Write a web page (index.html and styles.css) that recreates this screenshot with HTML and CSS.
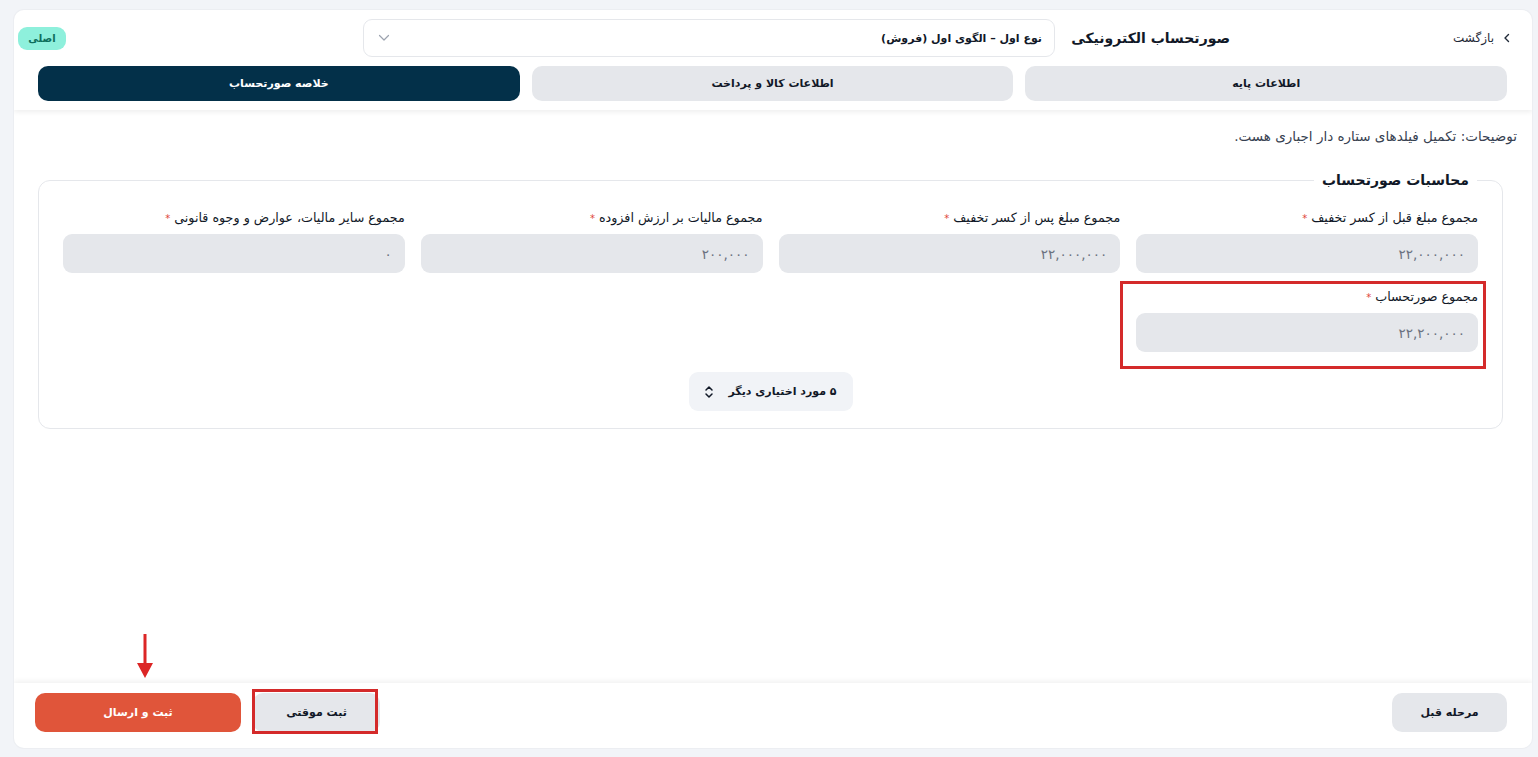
FILE: index.html
```html
<!DOCTYPE html>
<html lang="fa" dir="rtl">
<head>
<meta charset="utf-8">
<title>صورتحساب الکترونیکی</title>
<link rel="stylesheet" href="styles.css">
</head>
<body>
<div class="card">
  <header class="header">
    <div class="top-row">
      <a class="back" href="#">
        <svg class="back-icon" width="10" height="10" viewBox="0 0 10 10"><path d="M6.5 1.5 L3 5 L6.5 8.5" fill="none" stroke="#1f2937" stroke-width="1.4" stroke-linecap="round" stroke-linejoin="round"/></svg>
        <span>بازگشت</span>
      </a>
      <h1 class="title">صورتحساب الکترونیکی</h1>
      <div class="select">
        <span class="select-text">نوع اول – الگوی اول (فروش)</span>
        <svg width="12" height="8" viewBox="0 0 12 8"><path d="M1.5 1.5 L6 6 L10.5 1.5" fill="none" stroke="#9ca3af" stroke-width="1.2" stroke-linecap="round" stroke-linejoin="round"/></svg>
      </div>
      <span class="badge">اصلی</span>
    </div>
    <nav class="tabs">
      <div class="tab">اطلاعات پایه</div>
      <div class="tab">اطلاعات کالا و پرداخت</div>
      <div class="tab active">خلاصه صورتحساب</div>
    </nav>
  </header>

  <main class="content">
    <p class="note">توضیحات: تکمیل فیلدهای ستاره دار اجباری هست.</p>
    <fieldset class="box">
      <legend class="legend">محاسبات صورتحساب</legend>
      <div class="grid">
        <div class="field">
          <label class="label">مجموع مبلغ قبل از کسر تخفیف <span class="star">*</span></label>
          <div class="input">۲۲,۰۰۰,۰۰۰</div>
        </div>
        <div class="field">
          <label class="label">مجموع مبلغ پس از کسر تخفیف <span class="star">*</span></label>
          <div class="input">۲۲,۰۰۰,۰۰۰</div>
        </div>
        <div class="field">
          <label class="label">مجموع مالیات بر ارزش افزوده <span class="star">*</span></label>
          <div class="input">۲۰۰,۰۰۰</div>
        </div>
        <div class="field">
          <label class="label">مجموع سایر مالیات، عوارض و وجوه قانونی <span class="star">*</span></label>
          <div class="input">۰</div>
        </div>
        <div class="field highlighted">
          <label class="label">مجموع صورتحساب <span class="star">*</span></label>
          <div class="input">۲۲,۲۰۰,۰۰۰</div>
        </div>
      </div>
      <div class="more-row">
        <button class="more">
          <span>۵ مورد اختیاری دیگر</span>
          <svg width="10" height="14" viewBox="0 0 10 14"><path d="M2 5 L5 2 L8 5 M2 9 L5 12 L8 9" fill="none" stroke="#111827" stroke-width="1.5" stroke-linecap="round" stroke-linejoin="round"/></svg>
        </button>
      </div>
    </fieldset>
  </main>

  <footer class="footer">
    <button class="btn btn-gray">مرحله قبل</button>
    <div class="footer-left">
      <button class="btn btn-gray btn-draft">ثبت موقتی</button>
      <button class="btn btn-primary">ثبت و ارسال</button>
    </div>
  </footer>

  <svg class="arrow" width="18" height="44" viewBox="0 0 18 44"><path d="M9 0 V30" stroke="#dc2626" stroke-width="3"/><path d="M1 29 H17 L9 44 Z" fill="#dc2626"/></svg>
</div>
</body>
</html>
```

FILE: styles.css
```css
* { box-sizing: border-box; }

html, body { height: 100%; }

body {
  margin: 0;
  padding: 10px 6px 9px 14px;
  background: #f2f4f8;
  font-family: "DejaVu Sans", sans-serif;
  color: #111827;
}

.card {
  position: relative;
  height: 738px;
  background: #ffffff;
  border-radius: 10px;
  display: flex;
  flex-direction: column;
  overflow: hidden;
  box-shadow: 0 0 0 1px #eceef2;
}

.header {
  padding: 9px 25px 9px 24px;
  box-shadow: 0 2px 5px rgba(0, 0, 0, 0.07);
  position: relative;
  z-index: 1;
}

.top-row {
  display: flex;
  align-items: center;
  height: 38px;
  margin-left: -20px;
  margin-right: -5px;
}

.back {
  display: flex;
  align-items: center;
  gap: 8px;
  color: #1f2937;
  text-decoration: none;
  font-size: 12px;
  width: 60px;
  flex: none;
}

.back-icon { flex: none; }

.title {
  margin: 0 222px 0 0;
  width: 153px;
  flex: none;
  font-size: 14px;
  font-weight: 700;
  color: #111827;
  white-space: nowrap;
}

.select {
  margin-right: 22px;
  width: 692px;
  height: 38px;
  flex: none;
  border: 1px solid #e5e7eb;
  border-radius: 9px;
  display: flex;
  align-items: center;
  justify-content: space-between;
  padding: 0 12px 0 14px;
}

.select-text {
  font-size: 11px;
  font-weight: 700;
  color: #111827;
}

.badge {
  margin-right: auto;
  background: #8ef0dc;
  color: #0f6f5c;
  font-size: 10px;
  font-weight: 700;
  height: 23px;
  width: 48px;
  border-radius: 9px;
  display: flex;
  align-items: center;
  justify-content: center;
}

.tabs {
  margin-top: 9px;
  display: grid;
  grid-template-columns: repeat(3, 1fr);
  gap: 12px;
}

.tab {
  height: 35px;
  border-radius: 10px;
  background: #e5e7eb;
  display: flex;
  align-items: center;
  justify-content: center;
  font-size: 11px;
  font-weight: 700;
  color: #111827;
}

.tab.active {
  background: #033049;
  color: #ffffff;
}

.content {
  flex: 1;
  padding: 15px 15px 0 24px;
}

.note {
  margin: 0;
  font-size: 13.5px;
  color: #374151;
  line-height: 22px;
}

.box {
  margin: 25px 14px 0 0;
  border: 1px solid #e5e7eb;
  border-radius: 12px;
  padding: 20px 24px 17px 24px;
  min-width: 0;
}

.legend {
  margin-right: 1px;
  padding: 0 8px;
  font-size: 14px;
  font-weight: 700;
  color: #111827;
}

.grid {
  display: grid;
  grid-template-columns: repeat(4, 1fr);
  column-gap: 16px;
  row-gap: 14px;
}

.field {
  display: flex;
  flex-direction: column;
  gap: 5px;
  position: relative;
}

.label {
  font-size: 12.7px;
  color: #111827;
  line-height: 20px;
  white-space: nowrap;
}

.star { color: #e0453a; font-size: 10px; }

.input {
  height: 39px;
  border-radius: 9px;
  background: #e5e7eb;
  display: flex;
  align-items: center;
  padding: 0 13px;
  font-size: 13.5px;
  color: #6b7280;
}

.highlighted::after {
  content: "";
  position: absolute;
  top: -6px;
  bottom: -17px;
  right: -8px;
  left: -16px;
  border: 3px solid #d42a2a;
  pointer-events: none;
}

.more-row {
  display: flex;
  justify-content: center;
  margin-top: 20px;
}

.more {
  width: 164px;
  height: 39px;
  border: 0;
  border-radius: 9px;
  background: #f1f3f7;
  display: flex;
  align-items: center;
  justify-content: center;
  gap: 14px;
  font-family: inherit;
  font-size: 11px;
  font-weight: 700;
  color: #111827;
  padding: 0;
}

.footer {
  height: 65px;
  padding: 9px 25px 15px 21px;
  display: flex;
  align-items: center;
  justify-content: space-between;
  box-shadow: 0 -2px 5px rgba(0, 0, 0, 0.06);
  position: relative;
}

.footer-left {
  display: flex;
  gap: 12px;
}

.btn {
  height: 39px;
  border: 0;
  border-radius: 10px;
  font-family: inherit;
  font-size: 11px;
  font-weight: 700;
  color: #111827;
}

.btn-gray {
  background: #e5e7eb;
  width: 115px;
}

.btn-draft {
  width: 127px;
  position: relative;
}

.btn-draft::after {
  content: "";
  position: absolute;
  top: -4px;
  bottom: -2px;
  left: -1px;
  right: 2px;
  border: 3px solid #d42a2a;
  pointer-events: none;
}

.btn-primary {
  width: 206px;
  background: #e0553a;
  color: #ffffff;
}

.arrow {
  position: absolute;
  left: 122px;
  top: 624px;
}
```
